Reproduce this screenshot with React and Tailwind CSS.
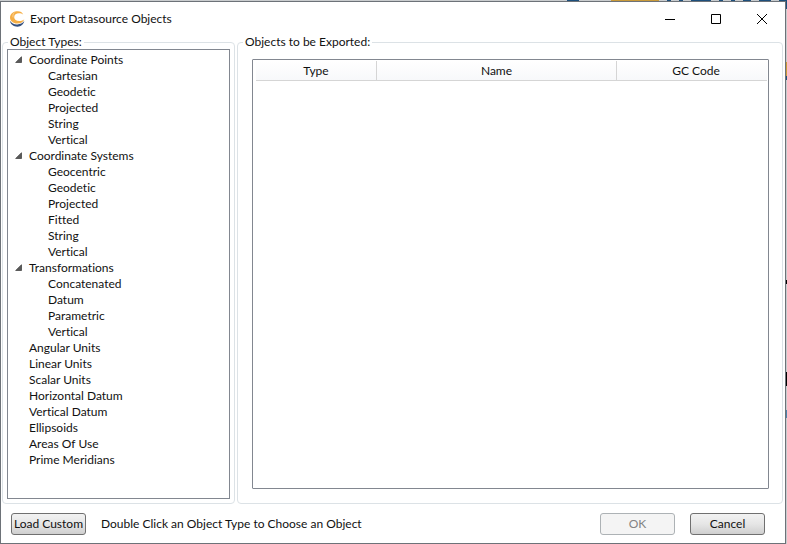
import React from 'react';

const tree = [
  { name: 'Coordinate Points', children: ['Cartesian', 'Geodetic', 'Projected', 'String', 'Vertical'] },
  { name: 'Coordinate Systems', children: ['Geocentric', 'Geodetic', 'Projected', 'Fitted', 'String', 'Vertical'] },
  { name: 'Transformations', children: ['Concatenated', 'Datum', 'Parametric', 'Vertical'] },
  { name: 'Angular Units' },
  { name: 'Linear Units' },
  { name: 'Scalar Units' },
  { name: 'Horizontal Datum' },
  { name: 'Vertical Datum' },
  { name: 'Ellipsoids' },
  { name: 'Areas Of Use' },
  { name: 'Prime Meridians' },
];

const Logo = () => (
  <svg viewBox="0 0 16 16" className="w-4 h-4 shrink-0" aria-hidden="true">
    <path d="M.9 9.800C2.500 12.300 5 13.500 8.300 13.400c3-.1 5.200-1.200 7-3.300C14.600 13.500 11.900 15.700 8.500 15.700 4.500 15.700 1.500 13.400.9 9.800z" fill="#34507f" />
    <path d="M4.300 1.200C2.200 2.400 1 4.400 1 6.600c0 3.500 3.100 6 7.200 6 3.500 0 6.200-1.700 7.200-4.400-1.300 1.200-2.900 1.800-4.900 1.800C7.200 10 5.200 8.400 5.200 6.200c0-2.500 2-4 4.800-4 1.700 0 3 .4 4.200 1.400C13.400 1.400 11.400.2 8.900.2 6.800.2 5.500.6 4.300 1.200z" fill="#f5ae45" />
    <path d="M5.400 1.600C4 3 3.600 4.600 4.100 6.400" stroke="#fff" strokeWidth=".6" strokeOpacity=".7" fill="none" />
  </svg>
);

const TitleBar = () => (
  <header className="flex items-center h-[33px] pl-2 pr-4 shrink-0">
    <Logo />
    <h1 className="ml-1 pl-px whitespace-nowrap">Export Datasource Objects</h1>
    <div className="ml-auto flex items-center gap-8">
      <button aria-label="Minimize" className="flex items-center justify-center w-3.5 h-4">
        <svg viewBox="0 0 12 12" className="w-3 h-3" stroke="#000"><path d="M1 6.500h10" /></svg>
      </button>
      <button aria-label="Maximize" className="flex items-center justify-center w-3.5 h-4">
        <svg viewBox="0 0 12 12" className="w-3 h-3" stroke="#000" fill="none"><path d="M1.500 1.500h9v9h-9z" /></svg>
      </button>
      <button aria-label="Close" className="flex items-center justify-center w-3.5 h-4">
        <svg viewBox="0 0 12 12" className="w-3 h-3" stroke="#000"><path d="M1 1l10 10M11 1L1 11" /></svg>
      </button>
    </div>
  </header>
);

const TreeNode = ({ node }) => {
  const [open, setOpen] = React.useState(true);

  if (!node.children) {
    return <li className="pl-[21px]"><button className="block h-4 leading-4">{node.name}</button></li>;
  }

  return (
    <li>
      <button onClick={() => setOpen(!open)} aria-expanded={open} className="flex items-center h-4 leading-4">
        <svg viewBox="0 0 7 7" className={`w-[7px] h-[7px] mx-[7px] mb-0.5 ${open ? '' : '-rotate-45'}`}>
          <path d="M6.500.7v5.800H.7z" fill="#595959" stroke="#484848" strokeWidth=".8" />
        </svg>
        {node.name}
      </button>
      {open && (
        <ul className="pl-10">
          {node.children.map(child => (
            <li key={child}><button className="block h-4 leading-4">{child}</button></li>
          ))}
        </ul>
      )}
    </li>
  );
};

const buttonClass = 'w-[75px] h-[22px] shrink-0 rounded-[3px] border text-center leading-5 whitespace-nowrap';

export default function App() {
  return (
    <div className="min-h-screen flex flex-col bg-[#c9ccce] font-['Lato','Open_Sans',sans-serif] [font-variant-ligatures:no-common-ligatures] text-[12px] leading-4 text-[#111]">
      {/* Slivers of the page behind the dialog: top edge, then right edge */}
      <div className="flex justify-end gap-2 h-px shrink-0" aria-hidden="true">
        <span className="w-3 mr-6 bg-[#1d4f7c]" />
        <span className="w-12 bg-[#c99a3a]" />
        <span className="w-1 bg-[#1d4f7c]" />
        <span className="w-1 bg-[#1d4f7c]" />
        <span className="w-5 bg-[#1d4f7c]" />
        <span className="w-1 bg-[#1d4f7c]" />
        <span className="w-1 bg-[#1d4f7c]" />
        <span className="w-2 bg-[#1d4f7c]" />
        <span className="w-3 bg-[#1d4f7c]" />
        <span className="w-2 bg-[#1d4f7c]" />
      </div>

      <div className="flex-1 flex">
        <div className="flex-1 min-w-0 flex flex-col bg-white border border-[#6d7278]">
          <TitleBar />

          <main className="flex-1 flex gap-0.5 pl-px pr-0.5">
            <fieldset className="flex w-[233px] shrink-0 min-w-0 rounded-[4px] border border-[#dce2e6] px-1 pb-1">
              <legend className="ml-px px-0.5 leading-[14px]">Object Types:</legend>
              <ul className="flex-1 border border-[#828790] pt-0.5 whitespace-nowrap">
                {tree.map(node => <TreeNode key={node.name} node={node} />)}
              </ul>
            </fieldset>

            <fieldset className="flex flex-1 min-w-0 rounded-[4px] border border-[#dce2e6] pt-2.5 pl-3.5 pr-[13px] pb-3.5">
              <legend className="-ml-[9px] px-0.5 leading-[14px]">Objects to be Exported:</legend>
              <div className="flex-1 rounded-[1px] border border-[#828790] pt-px pl-[3px] pr-px">
                <table className="w-full table-fixed border-separate border-spacing-0">
                  <thead>
                    <tr className="h-5 bg-linear-to-b from-white to-[#f7f8fa]">
                      <th className="w-[121px] p-0 font-normal border-r border-b border-[#d5d5d5]">Type</th>
                      <th className="p-0 font-normal border-r border-b border-[#d5d5d5]">Name</th>
                      <th className="w-[150px] p-0 pl-2 font-normal border-b border-[#d5d5d5]">GC Code</th>
                    </tr>
                  </thead>
                  <tbody />
                </table>
              </div>
            </fieldset>
          </main>

          <footer className="flex items-center h-[39px] shrink-0 pl-2.5 pr-5">
            <button className={`${buttonClass} border-[#707070] bg-linear-to-b from-[#f2f2f2] via-[#e6e6e6] to-[#cfcfcf]`}>Load Custom</button>
            <p className="ml-[15px] whitespace-nowrap">Double Click an Object Type to Choose an Object</p>
            <div className="ml-auto flex gap-[15px]">
              <button disabled className={`${buttonClass} border-[#adb2b5] bg-[#f4f4f4] text-[#838383]`}>OK</button>
              <button className={`${buttonClass} border-[#707070] bg-linear-to-b from-[#f2f2f2] via-[#e6e6e6] to-[#cfcfcf]`}>Cancel</button>
            </div>
          </footer>
        </div>

        <div className="flex flex-col w-px shrink-0" aria-hidden="true">
          <span className="h-2 bg-[#1d4f7c]" />
          <span className="h-3.5 mt-[53px] bg-[#c99a3a]" />
          <span className="h-1 bg-[#1d4f7c]" />
          <span className="h-1 mt-50 bg-black" />
          <span className="h-3.5 mt-22 bg-black" />
          <span className="h-2 mt-6 bg-[#4d83ab]" />
        </div>
      </div>
    </div>
  );
}
